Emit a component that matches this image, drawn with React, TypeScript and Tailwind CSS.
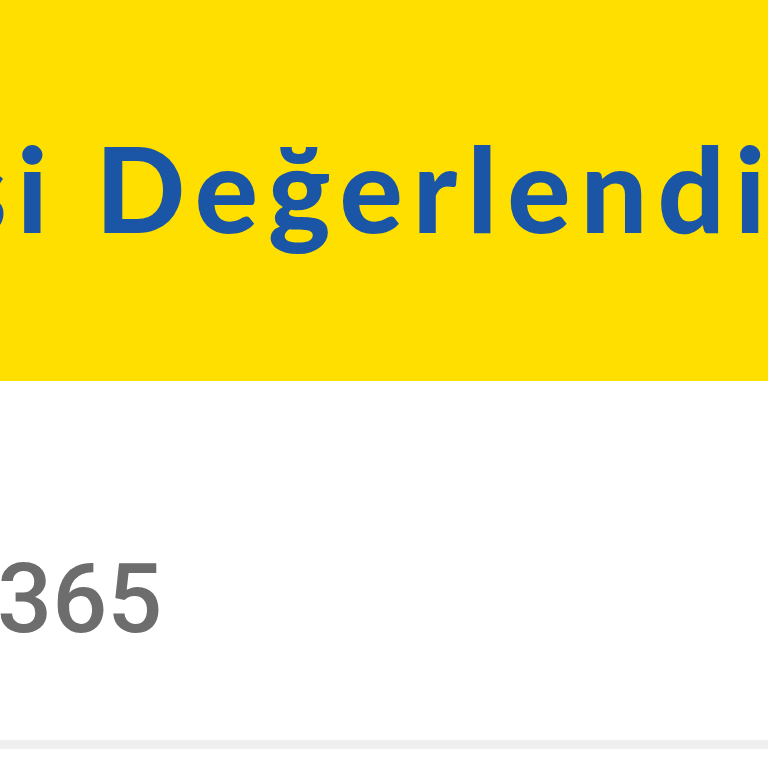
export default function App() {
  return (
    <div className="w-[768px] h-[768px] overflow-hidden bg-white">
      <div className="h-[381px] bg-[#ffdf00] overflow-hidden flex items-center">
        <div
          className="whitespace-nowrap text-[118px] leading-none font-black tracking-[10px] text-[#1b55a5] ml-[-178px] mt-[-6px]"
          style={{ fontFamily: "Lato, 'Noto Sans', sans-serif" }}
        >
          Kişi Değerlendirme
        </div>
      </div>
      <div className="h-[359px] flex items-center">
        <div
          className="whitespace-nowrap text-[97px] leading-none font-medium text-[#6d6d6d] ml-[-3px] mt-[78px]"
          style={{ fontFamily: "Roboto, 'Noto Sans', sans-serif" }}
        >
          365
        </div>
      </div>
      <div className="h-[9px] bg-[#efefef]" />
    </div>
  );
}
